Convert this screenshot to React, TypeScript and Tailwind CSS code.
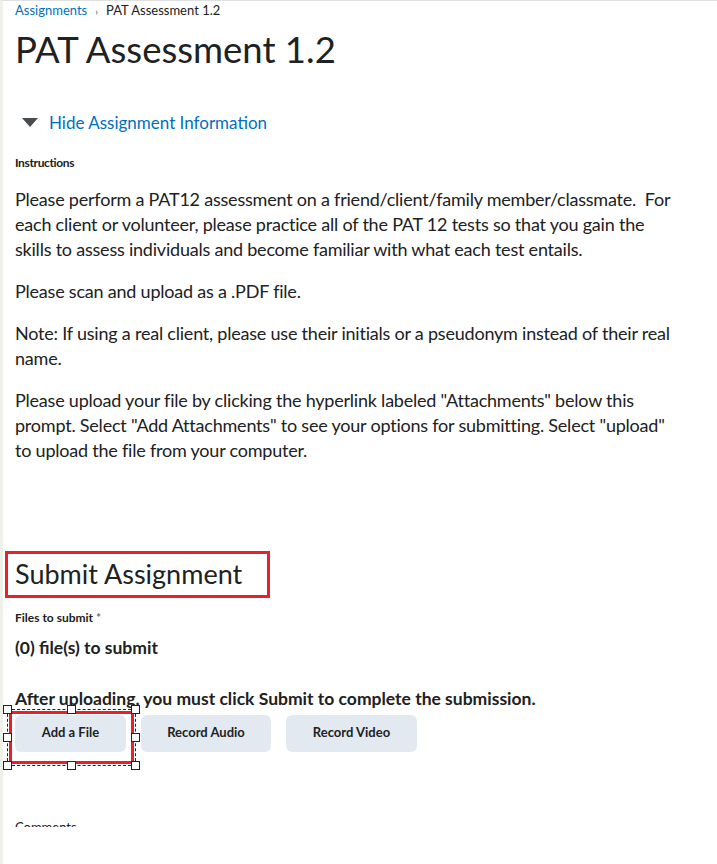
import React from "react";

const handles = [
	"left-[-5px] top-[-5px]",
	"left-[59px] top-[-5px]",
	"right-[-5px] top-[-5px]",
	"left-[-5px] top-[23px]",
	"right-[-5px] top-[23px]",
	"left-[-5px] bottom-[-5px]",
	"left-[59px] bottom-[-5px]",
	"right-[-5px] bottom-[-5px]",
];

function ActionButton({ label, width }: { label: string; width: string }) {
	return (
		<button
			className={`${width} h-[37px] rounded-md bg-[#e3e9f1] text-[13px] font-bold text-[#202122]`}
		>
			{label}
		</button>
	);
}

export default function App() {
	return (
		<div className="relative min-h-[864px] border-l-[3px] border-t border-l-[#eef0ea] border-t-[#e0e0e0] bg-white font-['Lato',sans-serif] text-[#202122]">
			<div className="pl-3">
				<nav className="flex h-[19px] items-center gap-2 pt-px text-[13px]">
					<a className="text-[#006fbf]">Assignments</a>
					<span className="text-[10px] text-[#494c4e]">›</span>
					<span>PAT Assessment 1.2</span>
				</nav>
				<h1 className="mt-[6px] text-[36.5px] leading-[46px]">PAT Assessment 1.2</h1>

				<button className="mt-[38px] flex items-center gap-[11px] pl-[7px] text-[17px] text-[#006fbf]">
					<svg width="16" height="9" viewBox="0 0 16 9">
						<path d="M0 0H16L8 9Z" fill="#494c4e" />
					</svg>
					Hide Assignment Information
				</button>

				<h2 className="mt-[19px] text-[12px] font-bold leading-[16px] tracking-[-0.03em]">
					Instructions
				</h2>

				<div className="mt-[16px] space-y-[17px] pr-[36px] text-[18px] leading-[25px] tracking-[-0.012em]">
					<p>
						Please perform a PAT12 assessment on a friend/client/family member/classmate.&nbsp; For
						each client or volunteer, please practice all of the PAT 12 tests so that you gain the
						skills to assess individuals and become familiar with what each test entails.
					</p>
					<p>Please scan and upload as a .PDF file.</p>
					<p>
						Note: If using a real client, please use their initials or a pseudonym instead of their
						real name.
					</p>
					<p>
						Please upload your file by clicking the hyperlink labeled "Attachments" below this
						prompt. Select "Add Attachments" to see your options for submitting. Select "upload"
						to upload the file from your computer.
					</p>
				</div>
			</div>

			<div className="mt-[88px] pl-[2px]">
				<div className="inline-block border-[3px] border-[#e8202a] pb-[4px] pl-[7px] pr-[25px] pt-[3px]">
					<h2 className="text-[27px] leading-[34px]">Submit Assignment</h2>
				</div>
			</div>

			<div className="pl-3">
				<div className="mt-[12px] text-[12px] font-bold leading-[16px]">
					Files to submit <span className="text-[#6e7376]">*</span>
				</div>
				<div className="mt-[11px] text-[17.5px] font-bold leading-[22px]">(0) file(s) to submit</div>

				<p className="mt-[29px] text-[17.5px] font-bold leading-[22px]">
					After uploading, you must click Submit to complete the submission.
				</p>

				<div className="relative mt-[5px] flex gap-[15px]">
					<ActionButton label="Add a File" width="w-[111px]" />
					<ActionButton label="Record Audio" width="w-[130px]" />
					<ActionButton label="Record Video" width="w-[131px]" />

					<div className="absolute left-[-8px] top-[-6px] h-[57px] w-[129px] border border-dashed border-[#222]">
						<div className="absolute inset-[1px] border-[3px] border-[#e8202a]" />
						{handles.map((h) => (
							<span
								key={h}
								className={`absolute ${h} h-[9px] w-[9px] border border-[#222] bg-white`}
							/>
						))}
					</div>
				</div>

				<div className="mt-[63px] h-[12px] overflow-hidden text-[13px] leading-[20px]">
					<span className="relative top-[2px]">Comments</span>
				</div>
			</div>
		</div>
	);
}
